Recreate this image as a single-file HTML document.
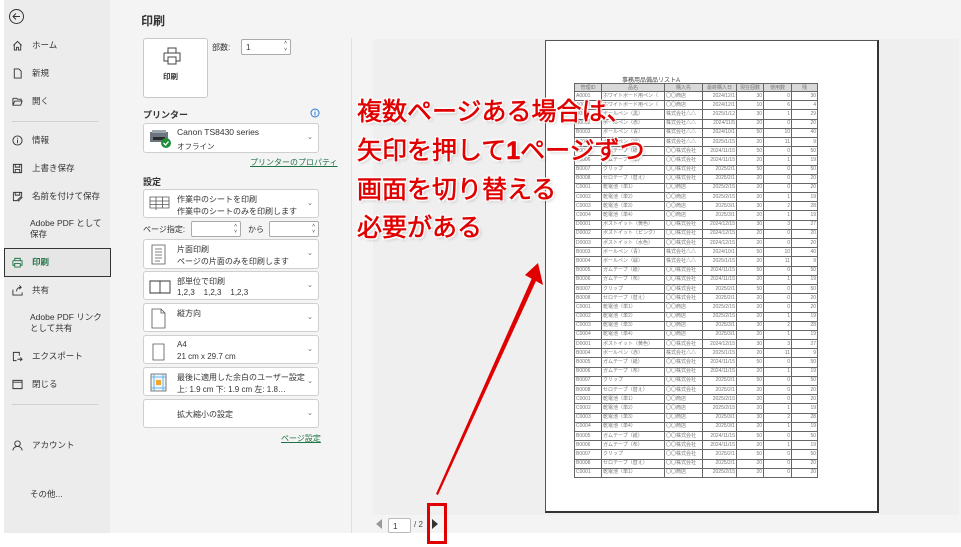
<!DOCTYPE html>
<html><head><meta charset="utf-8">
<style>
*{box-sizing:border-box;margin:0;padding:0}
body{width:961px;height:547px;overflow:hidden;background:#fff;font-family:"Liberation Sans","Noto Sans CJK JP",sans-serif;color:#333;position:relative}
.abs{position:absolute}
#side{left:4px;top:0;width:106px;height:533px;background:#ececec}
.si{position:absolute;left:12px;font-size:8.5px;color:#333;display:flex;align-items:center}
.si svg{width:11px;height:11px;margin-right:9px}
.si .t{line-height:11px}
#main{left:110px;top:0;width:851px;height:533px;background:#f4f4f4}
.box{position:absolute;left:143px;width:176px;background:#fff;border:1px solid #cfcfcf;border-radius:3px}
.box .l1,.box .l2{position:absolute;left:33px;font-size:8px;color:#333;white-space:nowrap}
.box .l1{top:4px}.box .l2{top:16px}
.box .ch{position:absolute;right:5px;top:9px;font-size:7px;color:#666}
.box svg{position:absolute;left:5px;top:4px}
.lnk{font-size:8px;color:#217346;text-decoration:underline;position:absolute}
#prev{left:373px;top:39px;width:586px;height:476px;background:#efefef}
#page{left:545px;top:40px;width:334px;height:473px;background:#fff;border:1px solid #555;border-right:2px solid #333;border-bottom:2px solid #333}
table{position:absolute;left:28px;top:42px;border-collapse:collapse;font-size:5px;color:#777;width:244px}
td{border:1px solid #666;height:9.2px;padding:0 1px;white-space:nowrap;overflow:hidden;line-height:7px}
td.r{text-align:right}
th{border:1px solid #666;background:#d9d9d9;font-weight:normal;height:8px;font-size:5px}
.ann{position:absolute;left:357px;font-size:25px;line-height:30px;font-weight:normal;color:#e00000;-webkit-text-stroke:0.6px #e00000;text-shadow:0 0 2px #fff,0 0 2px #fff,1.5px 1.5px 1px #fff,-1.5px -1.5px 1px #fff,1.5px -1.5px 1px #fff,-1.5px 1.5px 1px #fff,2px 2px 3px rgba(0,0,0,.25);white-space:nowrap}
</style></head><body>
<div id="main" class="abs"></div>
<div id="side" class="abs"></div>
<svg class="abs" style="left:8px;top:8px" width="17" height="17" viewBox="0 0 17 17"><circle cx="8.5" cy="8.5" r="7" fill="none" stroke="#333" stroke-width="1"/><path d="M12 8.5H5M8 5.5L5 8.5L8 11.5" fill="none" stroke="#333" stroke-width="1"/></svg>
<div class="si" style="top:40px"><svg viewBox="0 0 12 12"><path d="M1.5 6L6 1.5L10.5 6M2.5 5v6h2.5V8h2v3h2.5V5" fill="none" stroke="#333"/></svg><span class="t">ホーム</span></div>
<div class="si" style="top:68px"><svg viewBox="0 0 12 12"><path d="M2.5 1h5l2.5 2.5V11h-7.5z" fill="none" stroke="#333"/></svg><span class="t">新規</span></div>
<div class="si" style="top:96px"><svg viewBox="0 0 12 12"><path d="M1 2.5h4l1 1h4v2M1 2.5V10h8.5l1.5-4.5H3L1 10" fill="none" stroke="#333"/></svg><span class="t">開く</span></div>
<div class="abs" style="left:12px;top:121px;width:86px;height:1px;background:#d0d0d0"></div>
<div class="si" style="top:135px"><svg viewBox="0 0 12 12"><circle cx="6" cy="6" r="5" fill="none" stroke="#333"/><path d="M6 5v4M6 3v1" stroke="#333"/></svg><span class="t">情報</span></div>
<div class="si" style="top:163px"><svg viewBox="0 0 12 12"><path d="M1.5 1.5h9v9h-9zM3.5 1.5v3h5v-3M3.5 10.5V7h5v3.5" fill="none" stroke="#333"/></svg><span class="t">上書き保存</span></div>
<div class="si" style="top:191px"><svg viewBox="0 0 12 12"><path d="M1.5 1.5h9v4M1.5 1.5v9h4M3.5 1.5v3h5v-3M7 11l4-4-1-1-4 4z" fill="none" stroke="#333"/></svg><span class="t">名前を付けて保存</span></div>
<div class="si" style="top:218px;left:30px"><span class="t">Adobe PDF として<br>保存</span></div>
<div class="abs" style="left:4px;top:248px;width:107px;height:29px;background:#e6e6e6;border:1px solid #333"></div>
<div class="si" style="top:257px;color:#217346;font-weight:bold"><svg viewBox="0 0 12 12"><path d="M3 4V1.5h6V4M1 4h10v5H9M3 9H1V4M3 7h6v4H3z" fill="none" stroke="#217346"/></svg><span class="t">印刷</span></div>
<div class="si" style="top:285px"><svg viewBox="0 0 12 12"><path d="M1 5v6h10V8M5 7c0-3 2-4.5 5-4.5M8 0.5l2 2-2 2" fill="none" stroke="#333"/></svg><span class="t">共有</span></div>
<div class="si" style="top:312px;left:30px"><span class="t">Adobe PDF リンク<br>として共有</span></div>
<div class="si" style="top:351px"><svg viewBox="0 0 12 12"><path d="M8 5V1.5H1.5v9H5M6 9h5M9 7l2 2-2 2" fill="none" stroke="#333"/></svg><span class="t">エクスポート</span></div>
<div class="si" style="top:379px"><svg viewBox="0 0 12 12"><path d="M1 1.5h10v9H1zM1 3.5h10" fill="none" stroke="#333"/></svg><span class="t">閉じる</span></div>
<div class="abs" style="left:12px;top:404px;width:86px;height:1px;background:#d0d0d0"></div>
<div class="si" style="top:440px"><svg viewBox="0 0 12 12"><circle cx="6" cy="4" r="3" fill="none" stroke="#333"/><path d="M1 11.5c0-3 2.5-4.5 5-4.5s5 1.5 5 4.5" fill="none" stroke="#333"/></svg><span class="t">アカウント</span></div>
<div class="si" style="top:489px;left:30px"><span class="t">その他...</span></div>

<div class="abs" style="left:141px;top:12px;font-size:12px;font-weight:bold;color:#333">印刷</div>
<div class="abs" style="left:143px;top:38px;width:65px;height:60px;background:#fff;border:1px solid #c8c8c8;border-radius:3px"></div>
<svg class="abs" style="left:162px;top:46px" width="20" height="20" viewBox="0 0 20 20"><path d="M6 7V2h8v5M2 7h16v8h-4M6 15H2V7M6 11h8v7H6z" fill="none" stroke="#444" stroke-width="1"/></svg>
<div class="abs" style="left:163px;top:71px;font-size:7.5px;font-weight:bold">印刷</div>
<div class="abs" style="left:212px;top:42px;font-size:8px">部数:</div>
<div class="abs" style="left:241px;top:39px;width:50px;height:16px;background:#fff;border:1px solid #aaa;border-radius:2px;font-size:8px;padding:3px 4px">1<span style="position:absolute;right:3px;top:0;font-size:5px;line-height:7px">˄<br>˅</span></div>
<div class="abs" style="left:143px;top:108px;font-size:9px;font-weight:bold">プリンター</div>
<svg class="abs" style="left:310px;top:108px" width="10" height="10"><circle cx="5" cy="5" r="4" fill="none" stroke="#2b7cd3"/><path d="M5 4v3.5M5 2.5v.8" stroke="#2b7cd3"/></svg>
<div class="box" style="top:123px;height:30px"><svg width="24" height="22" viewBox="0 0 24 22"><rect x="1" y="4" width="18" height="10" fill="#6d7680"/><rect x="3" y="2" width="14" height="3" fill="#9aa5ad"/><rect x="4" y="9" width="12" height="3" fill="#2b2b2b"/><circle cx="17" cy="15" r="5" fill="#1f8f3a"/><path d="M14.5 15l2 2 3-3.5" fill="none" stroke="#fff" stroke-width="1.3"/></svg><div class="l1" style="top:3px;font-size:8.5px">Canon TS8430 series</div><div class="l2" style="top:17px;font-size:7.5px">オフライン</div><div class="ch">⌄</div></div>
<div class="lnk" style="left:250px;top:157px">プリンターのプロパティ</div>
<div class="abs" style="left:143px;top:175px;font-size:9px;font-weight:bold">設定</div>
<div class="box" style="top:189px;height:29px"><svg width="22" height="20" viewBox="0 0 22 20"><path d="M1 3h19v11H1zM1 7h19M1 10.5h19M7 3v13M13.5 3v11" fill="none" stroke="#555" stroke-width="0.8"/></svg><div class="l1">作業中のシートを印刷</div><div class="l2">作業中のシートのみを印刷します</div><div class="ch">⌄</div></div>
<div class="abs" style="left:143px;top:224px;font-size:8px">ページ指定:</div>
<div class="abs" style="left:191px;top:221px;width:50px;height:16px;background:#fff;border:1px solid #aaa;border-radius:2px"><span style="position:absolute;right:3px;top:1px;font-size:5px;line-height:6px">˄<br>˅</span></div>
<div class="abs" style="left:248px;top:224px;font-size:8px">から</div>
<div class="abs" style="left:269px;top:221px;width:50px;height:16px;background:#fff;border:1px solid #aaa;border-radius:2px"><span style="position:absolute;right:3px;top:1px;font-size:5px;line-height:6px">˄<br>˅</span></div>
<div class="box" style="top:239px;height:30px"><svg width="20" height="22" viewBox="0 0 20 22"><path d="M3 1h13v19H3zM6 5h7M6 8h7M6 11h7M6 14h7M6 17h5" fill="none" stroke="#555" stroke-width="0.8"/></svg><div class="l1">片面印刷</div><div class="l2">ページの片面のみを印刷します</div><div class="ch">⌄</div></div>
<div class="box" style="top:271px;height:29px"><svg width="24" height="20" viewBox="0 0 24 20"><path d="M1 5h10v12H1zM11 5h10v12H11z" fill="none" stroke="#333" stroke-width="0.9"/></svg><div class="l1">部単位で印刷</div><div class="l2">1,2,3&nbsp;&nbsp;&nbsp;&nbsp;1,2,3&nbsp;&nbsp;&nbsp;&nbsp;1,2,3</div><div class="ch">⌄</div></div>
<div class="box" style="top:303px;height:29px"><svg width="20" height="22" viewBox="0 0 20 22"><path d="M3 1h9l4 4v15H3zM12 1v4h4" fill="none" stroke="#555" stroke-width="0.8"/></svg><div class="l1">縦方向</div><div class="ch">⌄</div></div>
<div class="box" style="top:335px;height:29px"><svg width="20" height="22" viewBox="0 0 20 22"><path d="M4 4h11v16H4z" fill="none" stroke="#555" stroke-width="0.8"/></svg><div class="l1">A4</div><div class="l2">21 cm x 29.7 cm</div><div class="ch">⌄</div></div>
<div class="box" style="top:367px;height:29px"><svg width="20" height="22" viewBox="0 0 20 22"><path d="M2 2h15v17H2z" fill="#eef5fb" stroke="#555" stroke-width="0.8"/><path d="M5 2v17M14 2v17M2 5h15M2 16h15" stroke="#4aa3df" stroke-width="0.8"/><rect x="7" y="8" width="5" height="5" fill="#f5a623"/></svg><div class="l1">最後に適用した余白のユーザー設定</div><div class="l2">上: 1.9 cm 下: 1.9 cm 左: 1.8…</div><div class="ch">⌄</div></div>
<div class="box" style="top:399px;height:29px"><div class="l1" style="top:9px">拡大縮小の設定</div><div class="ch">⌄</div></div>
<div class="lnk" style="left:281px;top:433px">ページ設定</div>

<div class="abs" style="left:351px;top:38px;width:1px;height:495px;background:#e0e0e0"></div>
<div id="prev" class="abs"></div>
<div id="page" class="abs">
<div class="abs" style="left:76px;top:34px;font-size:6px;color:#444">事務用品備品リストA</div>
<table>
<tr><th style="width:27px">管理ID</th><th style="width:63px">品名</th><th style="width:38px">購入先</th><th style="width:34px">最終購入日</th><th style="width:27px">現在個数</th><th style="width:28px">使用数</th><th>残</th></tr>
<tr><td>A0001</td><td>ホワイトボード用ペン（</td><td>〇〇商店</td><td class="r">2024/12/1</td><td class="r">30</td><td class="r">0</td><td class="r">30</td></tr>
<tr><td>A0002</td><td>ホワイトボード用ペン（</td><td>〇〇商店</td><td class="r">2024/12/1</td><td class="r">10</td><td class="r">6</td><td class="r">4</td></tr>
<tr><td>B0001</td><td>ボールペン（黒）</td><td>株式会社△△</td><td class="r">2025/1/12</td><td class="r">30</td><td class="r">1</td><td class="r">29</td></tr>
<tr><td>B0002</td><td>ボールペン（赤）</td><td>株式会社△△</td><td class="r">2024/11/5</td><td class="r">20</td><td class="r">0</td><td class="r">20</td></tr>
<tr><td>B0003</td><td>ボールペン（青）</td><td>株式会社△△</td><td class="r">2024/10/1</td><td class="r">50</td><td class="r">10</td><td class="r">40</td></tr>
<tr><td>B0004</td><td>ボールペン（緑）</td><td>株式会社△△</td><td class="r">2025/1/15</td><td class="r">20</td><td class="r">11</td><td class="r">9</td></tr>
<tr><td>B0005</td><td>ガムテープ（紙）</td><td>〇〇株式会社</td><td class="r">2024/11/15</td><td class="r">50</td><td class="r">0</td><td class="r">50</td></tr>
<tr><td>B0006</td><td>ガムテープ（布）</td><td>〇〇株式会社</td><td class="r">2024/11/15</td><td class="r">20</td><td class="r">1</td><td class="r">19</td></tr>
<tr><td>B0007</td><td>クリップ</td><td>〇〇株式会社</td><td class="r">2025/2/1</td><td class="r">50</td><td class="r">0</td><td class="r">50</td></tr>
<tr><td>B0008</td><td>セロテープ（替え）</td><td>〇〇株式会社</td><td class="r">2025/2/1</td><td class="r">20</td><td class="r">0</td><td class="r">20</td></tr>
<tr><td>C0001</td><td>乾電池（単1）</td><td>〇〇商店</td><td class="r">2025/2/15</td><td class="r">20</td><td class="r">0</td><td class="r">20</td></tr>
<tr><td>C0002</td><td>乾電池（単2）</td><td>〇〇商店</td><td class="r">2025/2/15</td><td class="r">20</td><td class="r">1</td><td class="r">19</td></tr>
<tr><td>C0003</td><td>乾電池（単3）</td><td>〇〇商店</td><td class="r">2025/3/1</td><td class="r">30</td><td class="r">2</td><td class="r">28</td></tr>
<tr><td>C0004</td><td>乾電池（単4）</td><td>〇〇商店</td><td class="r">2025/3/1</td><td class="r">20</td><td class="r">1</td><td class="r">19</td></tr>
<tr><td>D0001</td><td>ポストイット（黄色）</td><td>〇〇株式会社</td><td class="r">2024/12/15</td><td class="r">30</td><td class="r">3</td><td class="r">27</td></tr>
<tr><td>D0002</td><td>ポストイット（ピンク）</td><td>〇〇株式会社</td><td class="r">2024/12/15</td><td class="r">20</td><td class="r">0</td><td class="r">20</td></tr>
<tr><td>D0003</td><td>ポストイット（水色）</td><td>〇〇株式会社</td><td class="r">2024/12/15</td><td class="r">20</td><td class="r">0</td><td class="r">20</td></tr>
<tr><td>B0003</td><td>ボールペン（青）</td><td>株式会社△△</td><td class="r">2024/10/1</td><td class="r">50</td><td class="r">10</td><td class="r">40</td></tr>
<tr><td>B0004</td><td>ボールペン（緑）</td><td>株式会社△△</td><td class="r">2025/1/15</td><td class="r">20</td><td class="r">11</td><td class="r">9</td></tr>
<tr><td>B0005</td><td>ガムテープ（紙）</td><td>〇〇株式会社</td><td class="r">2024/11/15</td><td class="r">50</td><td class="r">0</td><td class="r">50</td></tr>
<tr><td>B0006</td><td>ガムテープ（布）</td><td>〇〇株式会社</td><td class="r">2024/11/15</td><td class="r">20</td><td class="r">1</td><td class="r">19</td></tr>
<tr><td>B0007</td><td>クリップ</td><td>〇〇株式会社</td><td class="r">2025/2/1</td><td class="r">50</td><td class="r">0</td><td class="r">50</td></tr>
<tr><td>B0008</td><td>セロテープ（替え）</td><td>〇〇株式会社</td><td class="r">2025/2/1</td><td class="r">20</td><td class="r">0</td><td class="r">20</td></tr>
<tr><td>C0001</td><td>乾電池（単1）</td><td>〇〇商店</td><td class="r">2025/2/15</td><td class="r">20</td><td class="r">0</td><td class="r">20</td></tr>
<tr><td>C0002</td><td>乾電池（単2）</td><td>〇〇商店</td><td class="r">2025/2/15</td><td class="r">20</td><td class="r">1</td><td class="r">19</td></tr>
<tr><td>C0003</td><td>乾電池（単3）</td><td>〇〇商店</td><td class="r">2025/3/1</td><td class="r">30</td><td class="r">2</td><td class="r">28</td></tr>
<tr><td>C0004</td><td>乾電池（単4）</td><td>〇〇商店</td><td class="r">2025/3/1</td><td class="r">20</td><td class="r">1</td><td class="r">19</td></tr>
<tr><td>D0001</td><td>ポストイット（黄色）</td><td>〇〇株式会社</td><td class="r">2024/12/15</td><td class="r">30</td><td class="r">3</td><td class="r">27</td></tr>
<tr><td>B0004</td><td>ボールペン（赤）</td><td>株式会社△△</td><td class="r">2025/1/15</td><td class="r">20</td><td class="r">11</td><td class="r">9</td></tr>
<tr><td>B0005</td><td>ガムテープ（紙）</td><td>〇〇株式会社</td><td class="r">2024/11/15</td><td class="r">50</td><td class="r">0</td><td class="r">50</td></tr>
<tr><td>B0006</td><td>ガムテープ（布）</td><td>〇〇株式会社</td><td class="r">2024/11/15</td><td class="r">20</td><td class="r">1</td><td class="r">19</td></tr>
<tr><td>B0007</td><td>クリップ</td><td>〇〇株式会社</td><td class="r">2025/2/1</td><td class="r">50</td><td class="r">0</td><td class="r">50</td></tr>
<tr><td>B0008</td><td>セロテープ（替え）</td><td>〇〇株式会社</td><td class="r">2025/2/1</td><td class="r">20</td><td class="r">0</td><td class="r">20</td></tr>
<tr><td>C0001</td><td>乾電池（単1）</td><td>〇〇商店</td><td class="r">2025/2/15</td><td class="r">20</td><td class="r">0</td><td class="r">20</td></tr>
<tr><td>C0002</td><td>乾電池（単2）</td><td>〇〇商店</td><td class="r">2025/2/15</td><td class="r">20</td><td class="r">1</td><td class="r">19</td></tr>
<tr><td>C0003</td><td>乾電池（単3）</td><td>〇〇商店</td><td class="r">2025/3/1</td><td class="r">30</td><td class="r">2</td><td class="r">28</td></tr>
<tr><td>C0004</td><td>乾電池（単4）</td><td>〇〇商店</td><td class="r">2025/3/1</td><td class="r">20</td><td class="r">1</td><td class="r">19</td></tr>
<tr><td>B0005</td><td>ガムテープ（紙）</td><td>〇〇株式会社</td><td class="r">2024/11/15</td><td class="r">50</td><td class="r">0</td><td class="r">50</td></tr>
<tr><td>B0006</td><td>ガムテープ（布）</td><td>〇〇株式会社</td><td class="r">2024/11/15</td><td class="r">20</td><td class="r">1</td><td class="r">19</td></tr>
<tr><td>B0007</td><td>クリップ</td><td>〇〇株式会社</td><td class="r">2025/2/1</td><td class="r">50</td><td class="r">0</td><td class="r">50</td></tr>
<tr><td>B0008</td><td>セロテープ（替え）</td><td>〇〇株式会社</td><td class="r">2025/2/1</td><td class="r">20</td><td class="r">0</td><td class="r">20</td></tr>
<tr><td>C0001</td><td>乾電池（単1）</td><td>〇〇商店</td><td class="r">2025/2/15</td><td class="r">20</td><td class="r">0</td><td class="r">20</td></tr>
</table>
</div>

<div class="abs" style="left:376px;top:519px;width:0;height:0;border-top:5px solid transparent;border-bottom:5px solid transparent;border-right:6px solid #999"></div>
<div class="abs" style="left:388px;top:518px;width:23px;height:15px;background:#fff;border:1px solid #bbb;border-radius:2px;font-size:8px;padding:3px 4px">1</div>
<div class="abs" style="left:414px;top:520px;font-size:8px;color:#444">/ 2</div>
<div class="abs" style="left:432px;top:519px;width:0;height:0;border-top:5px solid transparent;border-bottom:5px solid transparent;border-left:6px solid #333"></div>
<div class="abs" style="left:427px;top:503px;width:20px;height:41px;border:3px solid #e00000"></div>

<svg class="abs" style="left:0;top:0" width="961" height="547"><polygon points="436,494 438,495 536,281 532,278" fill="#e00000"/><polygon points="538,263 525,275 543,285" fill="#e00000"/></svg>

<div class="ann" style="top:97px">複数ページある場合は、</div>
<div class="ann" style="top:136px">矢印を押して<b>1</b>ページずつ</div>
<div class="ann" style="top:175px">画面を切り替える</div>
<div class="ann" style="top:213px">必要がある</div>
</body></html>
